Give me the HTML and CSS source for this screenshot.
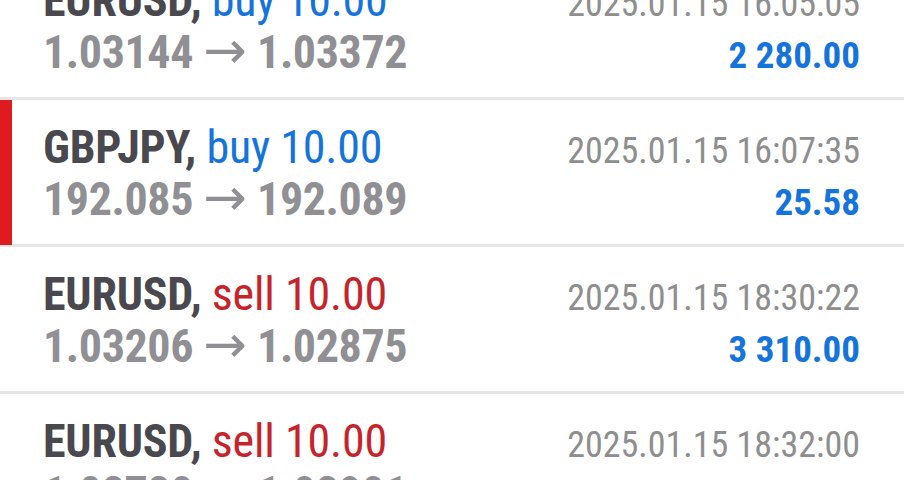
FILE: index.html
```html
<!DOCTYPE html>
<html>
<head>
  <title>History</title>
  <link rel="stylesheet" href="styles.css">
</head>
<body>
  <div class="deals">
    <div class="deal">
      <div class="deal-title"><b>EURUSD,</b> <span class="buy">buy 10.00</span></div>
      <div class="deal-time">2025.01.15 16:05:05</div>
      <div class="deal-prices">1.03144 <span class="arrow">&rarr;</span> 1.03372</div>
      <div class="deal-profit">2 280.00</div>
    </div>

    <div class="deal selected">
      <div class="deal-title"><b>GBPJPY,</b> <span class="buy">buy 10.00</span></div>
      <div class="deal-time">2025.01.15 16:07:35</div>
      <div class="deal-prices">192.085 <span class="arrow">&rarr;</span> 192.089</div>
      <div class="deal-profit">25.58</div>
    </div>

    <div class="deal">
      <div class="deal-title"><b>EURUSD,</b> <span class="sell">sell 10.00</span></div>
      <div class="deal-time">2025.01.15 18:30:22</div>
      <div class="deal-prices">1.03206 <span class="arrow">&rarr;</span> 1.02875</div>
      <div class="deal-profit">3 310.00</div>
    </div>

    <div class="deal">
      <div class="deal-title"><b>EURUSD,</b> <span class="sell">sell 10.00</span></div>
      <div class="deal-time">2025.01.15 18:32:00</div>
      <div class="deal-prices">1.02720 <span class="arrow">&rarr;</span> 1.02901</div>
      <div class="deal-profit">1 810.00</div>
    </div>
  </div>
</body>
</html>
```

FILE: styles.css
```css
body {
  margin: 0;
  background: #fff;
  font-family: Roboto, 'Noto Sans', sans-serif;
  font-stretch: 75%;
  overflow: hidden;
}

/* list is scrolled, first row is half out of view */
.deals {
  margin-top: -47px;
}

.deal {
  position: relative;
  display: grid;
  grid-template-columns: 1fr auto;
  grid-auto-rows: 52px;
  align-items: baseline;
  padding: 20px 44px 20px 43px;
  border-bottom: 3px solid #e6e6e6;
}

.deal.selected::before {
  content: "";
  position: absolute;
  left: 0;
  top: 0;
  bottom: -1px;
  width: 12px;
  background: #e01b1f;
}

.deal-title {
  font-size: 46px;
  color: #48484e;
  white-space: nowrap;
  letter-spacing: -0.2px;
}

.deal-title b {
  font-weight: 700;
}

.buy {
  color: #1474dc;
}

.sell {
  color: #c6242a;
}

.deal-prices {
  font-size: 46px;
  font-weight: 700;
  color: #8f8f94;
  white-space: nowrap;
  letter-spacing: -0.4px;
}

/* wider arrow than Roboto's, kept out of the line height */
.arrow {
  font-family: 'DejaVu Sans', sans-serif;
  font-stretch: normal;
  font-weight: 400;
  font-size: 52px;
  line-height: 0;
  letter-spacing: 0;
}

.deal-time {
  font-size: 36px;
  color: #8e8e8e;
  text-align: right;
}

.deal-profit {
  font-size: 37px;
  font-weight: 700;
  color: #1474dc;
  text-align: right;
}
```
